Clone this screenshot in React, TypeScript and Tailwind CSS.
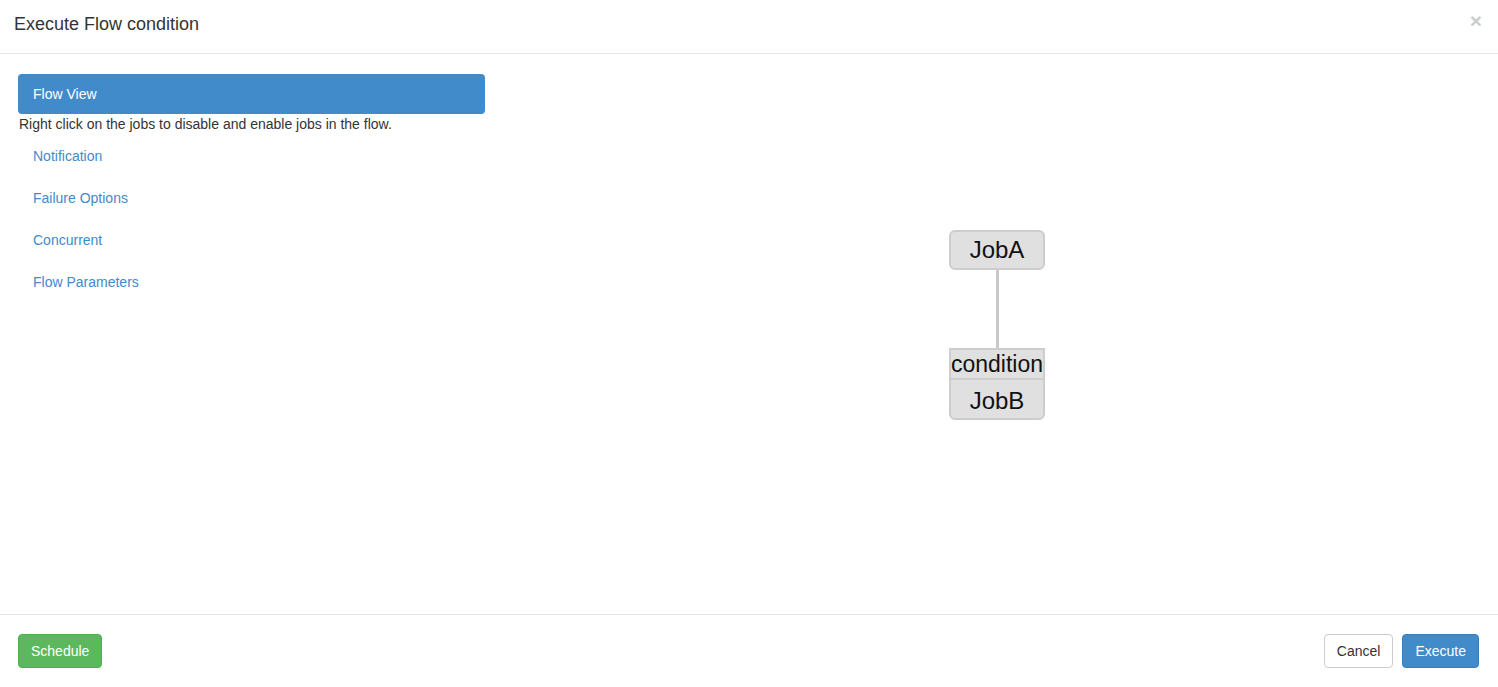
import React from 'react';

const navItems = ['Notification', 'Failure Options', 'Concurrent', 'Flow Parameters'];

function FlowGraph() {
  return (
    <div className="flex flex-col items-center w-[96px]">
      <div className="w-[96px] h-[40px] flex items-center justify-center rounded-[6px] border-2 border-[#cdcdcd] bg-[#e0e0e0] text-[24px] text-[#111] leading-none">
        JobA
      </div>
      <div className="w-[3px] h-[78px] bg-[#c9c9c9]" />
      <div className="w-[96px] h-[72px] flex flex-col border-2 border-[#cdcdcd] rounded-b-[6px] bg-[#e0e0e0] text-[#111]">
        <div className="h-[30px] shrink-0 flex items-center justify-center text-[23px] leading-none border-b-2 border-[#cdcdcd]">
          condition
        </div>
        <div className="flex-1 flex items-center justify-center text-[24px] leading-none pt-[3px]">
          JobB
        </div>
      </div>
    </div>
  );
}

export default function App() {
  return (
    <div className="w-[1498px] h-[687px] bg-white flex flex-col font-['Liberation_Sans',Arial,sans-serif] text-[14px] text-[#333]">
      <div className="h-[54px] shrink-0 border-b border-[#e5e5e5] flex items-center justify-between pl-[14px] pr-[16px]">
        <h4 className="text-[18px] leading-none text-[#333] -mt-[5px]">Execute Flow condition</h4>
        <span className="text-[21px] font-bold leading-none text-black opacity-20 -mt-[12px]">×</span>
      </div>

      <div className="h-[560px] shrink-0 flex pt-[20px] px-[18px]">
        <div className="w-[467px] shrink-0 flex flex-col">
          <div className="h-[40px] rounded-[4px] bg-[#428bca] text-white flex items-center px-[15px]">Flow View</div>
          <div className="h-[20px] leading-[20px] pl-[1px]">Right click on the jobs to disable and enable jobs in the flow.</div>
          {navItems.map(item => (
            <div key={item} className="mt-[2px] h-[40px] flex items-center px-[15px] text-[#428bca]">
              {item}
            </div>
          ))}
        </div>
        <div className="flex-1 flex justify-start pt-[156px] pl-[464px]">
          <FlowGraph />
        </div>
      </div>

      <div className="flex-1 border-t border-[#e5e5e5] flex items-start justify-between pt-[19px] pl-[18px] pr-[19px]">
        <button className="h-[34px] px-[12px] rounded-[4px] border border-[#4cae4c] bg-[#5cb85c] text-white">
          Schedule
        </button>
        <div className="flex gap-[9px]">
          <button className="h-[34px] px-[12px] rounded-[4px] border border-[#ccc] bg-white text-[#333]">
            Cancel
          </button>
          <button className="h-[34px] px-[12px] rounded-[4px] border border-[#357ebd] bg-[#428bca] text-white">
            Execute
          </button>
        </div>
      </div>
    </div>
  );
}
